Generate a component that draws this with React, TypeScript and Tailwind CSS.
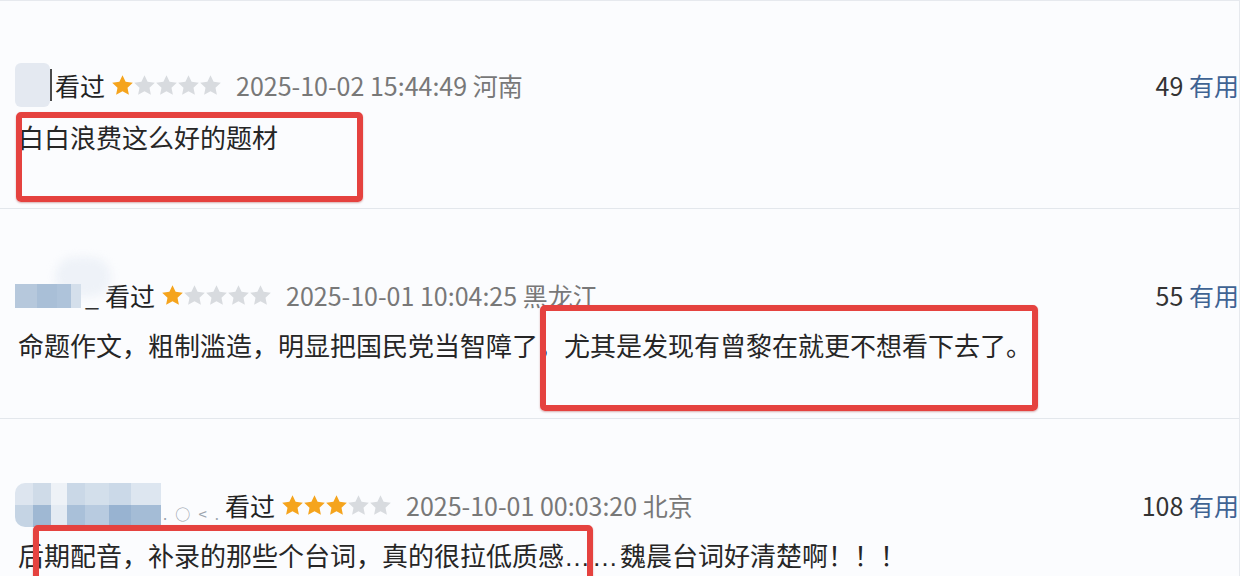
import React from 'react';

type Row = {
  stars: number;
  date: string;
  place: string;
  useful: number;
  avatar: 'a' | 'b' | 'c';
  content: React.ReactNode;
  box: string;
};

const rows: Row[] = [
  {
    stars: 1,
    date: '2025-10-02 15:44:49',
    place: '河南',
    useful: 49,
    avatar: 'a',
    content: '白白浪费这么好的题材',
    box: 'left-[16px] top-[110px] w-[347px] h-[90px]',
  },
  {
    stars: 1,
    date: '2025-10-01 10:04:25',
    place: '黑龙江',
    useful: 55,
    avatar: 'b',
    content: '命题作文，粗制滥造，明显把国民党当智障了，尤其是发现有曾黎在就更不想看下去了。',
    box: 'left-[540px] top-[96px] w-[498px] h-[106px]',
  },
  {
    stars: 3,
    date: '2025-10-01 00:03:20',
    place: '北京',
    useful: 108,
    avatar: 'c',
    content: (
      <>
        后期配音，补录的那些个台词，真的很拉低质感
        <span className="tracking-[2px]" style={{ fontFamily: '"Liberation Sans", sans-serif' }}>
          ……
        </span>
        魏晨台词好清楚啊！！！
      </>
    ),
    box: 'left-[33px] top-[106px] w-[560px] h-[80px]',
  },
];

function Star({ on }: { on: boolean }) {
  return (
    <svg viewBox="1.6 1.6 20.8 20" className="h-[20px] w-[21px]">
      <path
        d="M12 1.8l3.1 6.6 7.2.9-5.3 5 1.4 7.1L12 17.9l-6.4 3.5 1.4-7.1-5.3-5 7.2-.9z"
        fill={on ? '#f5a41d' : '#d8dbdf'}
      />
    </svg>
  );
}

function Avatar({ kind }: { kind: Row['avatar'] }) {
  if (kind === 'a') {
    return (
      <div className="flex items-center">
        <div className="h-[44px] w-[35px] rounded-[6px] bg-[#e4e9f1]" />
        <div className="h-[32px] w-[2px] bg-[#4a4a4a]" />
      </div>
    );
  }
  if (kind === 'b') {
    return (
      <div className="relative flex items-end">
        <div className="absolute left-[40px] top-[-26px] h-[40px] w-[56px] rounded-full bg-[#eef2f8] blur-[4px]" />
        <div className="relative flex h-[24px] blur-[0.6px]">
          <div className="w-[22px] bg-[#b6c8dc]" />
          <div className="w-[20px] bg-[#a9bfd7]" />
          <div className="w-[14px] bg-[#aec3da]" />
          <div className="w-[10px] bg-[#d4dfeb]" />
        </div>
        <span className="relative ml-[4px] mr-[3px] text-[#333]">_</span>
      </div>
    );
  }
  return (
    <div className="flex items-end">
      <div className="grid h-[44px] w-[146px] grid-cols-[18px_18px_16px_18px_24px_22px_30px] grid-rows-2 overflow-hidden rounded-l-[10px] blur-[0.7px]">
        <div className="bg-[#dde5ef]" />
        <div className="bg-[#cfdbe8]" />
        <div className="bg-[#eef2f7]" />
        <div className="bg-[#cad8e7]" />
        <div className="bg-[#d3dfeb]" />
        <div className="bg-[#cbd9e8]" />
        <div className="bg-[#dde6f0]" />
        <div className="bg-[#c5d4e4]" />
        <div className="bg-[#9fb8d3]" />
        <div className="bg-[#e4ebf3]" />
        <div className="bg-[#a9c0d9]" />
        <div className="bg-[#b8cbe0]" />
        <div className="bg-[#98b3d1]" />
        <div className="bg-[#a4bcd6]" />
      </div>
      <span className="mb-[6px] ml-[2px] mr-[3px] flex w-[56px] justify-between text-[15px] leading-none text-[#9aa3ad]">
        <span>.</span>
        <span>○</span>
        <span>&lt;</span>
        <span>.</span>
      </span>
    </div>
  );
}

function Review({ row, first }: { row: Row; first: boolean }) {
  return (
    <div className={`relative border-b border-[#e3e7ec] ${first ? 'h-[207px] pt-[67px]' : 'h-[210px] pt-[70px]'}`}>
      <div className="flex h-[32px] items-center pl-[15px] text-[25px] leading-none">
        <Avatar kind={row.avatar} />
        <span className="ml-[3px] text-[#222]">看过</span>
        <span className="ml-[7px] flex gap-[1px]">
          {[0, 1, 2, 3, 4].map((i) => (
            <Star key={i} on={i < row.stars} />
          ))}
        </span>
        <span className="ml-[15px] text-[#787878]">
          {row.date} {row.place}
        </span>
        <span className="ml-auto text-[#333]">
          {row.useful} <span className="text-[#3f6393]">有用</span>
        </span>
      </div>
      <div className={`${first ? 'mt-[19px]' : 'mt-[17px]'} pl-[18px] text-[26px] leading-[34px] text-[#262626] whitespace-nowrap`}>
        {row.content}
      </div>
      <div className={`absolute rounded-[5px] border-[6px] border-[#e5423f] shadow-[0_1px_2px_rgba(150,30,30,0.35)] ${row.box}`} />
    </div>
  );
}

export default function App() {
  return (
    <div
      className="h-[576px] w-[1240px] overflow-hidden border-t border-r border-[#e6e9ee] bg-[#fbfcfe] pt-[1px]"
      style={{ fontFamily: '"Noto Sans CJK SC", "Noto Sans", sans-serif' }}
    >
      {rows.map((row, i) => (
        <Review key={i} row={row} first={i === 0} />
      ))}
    </div>
  );
}
